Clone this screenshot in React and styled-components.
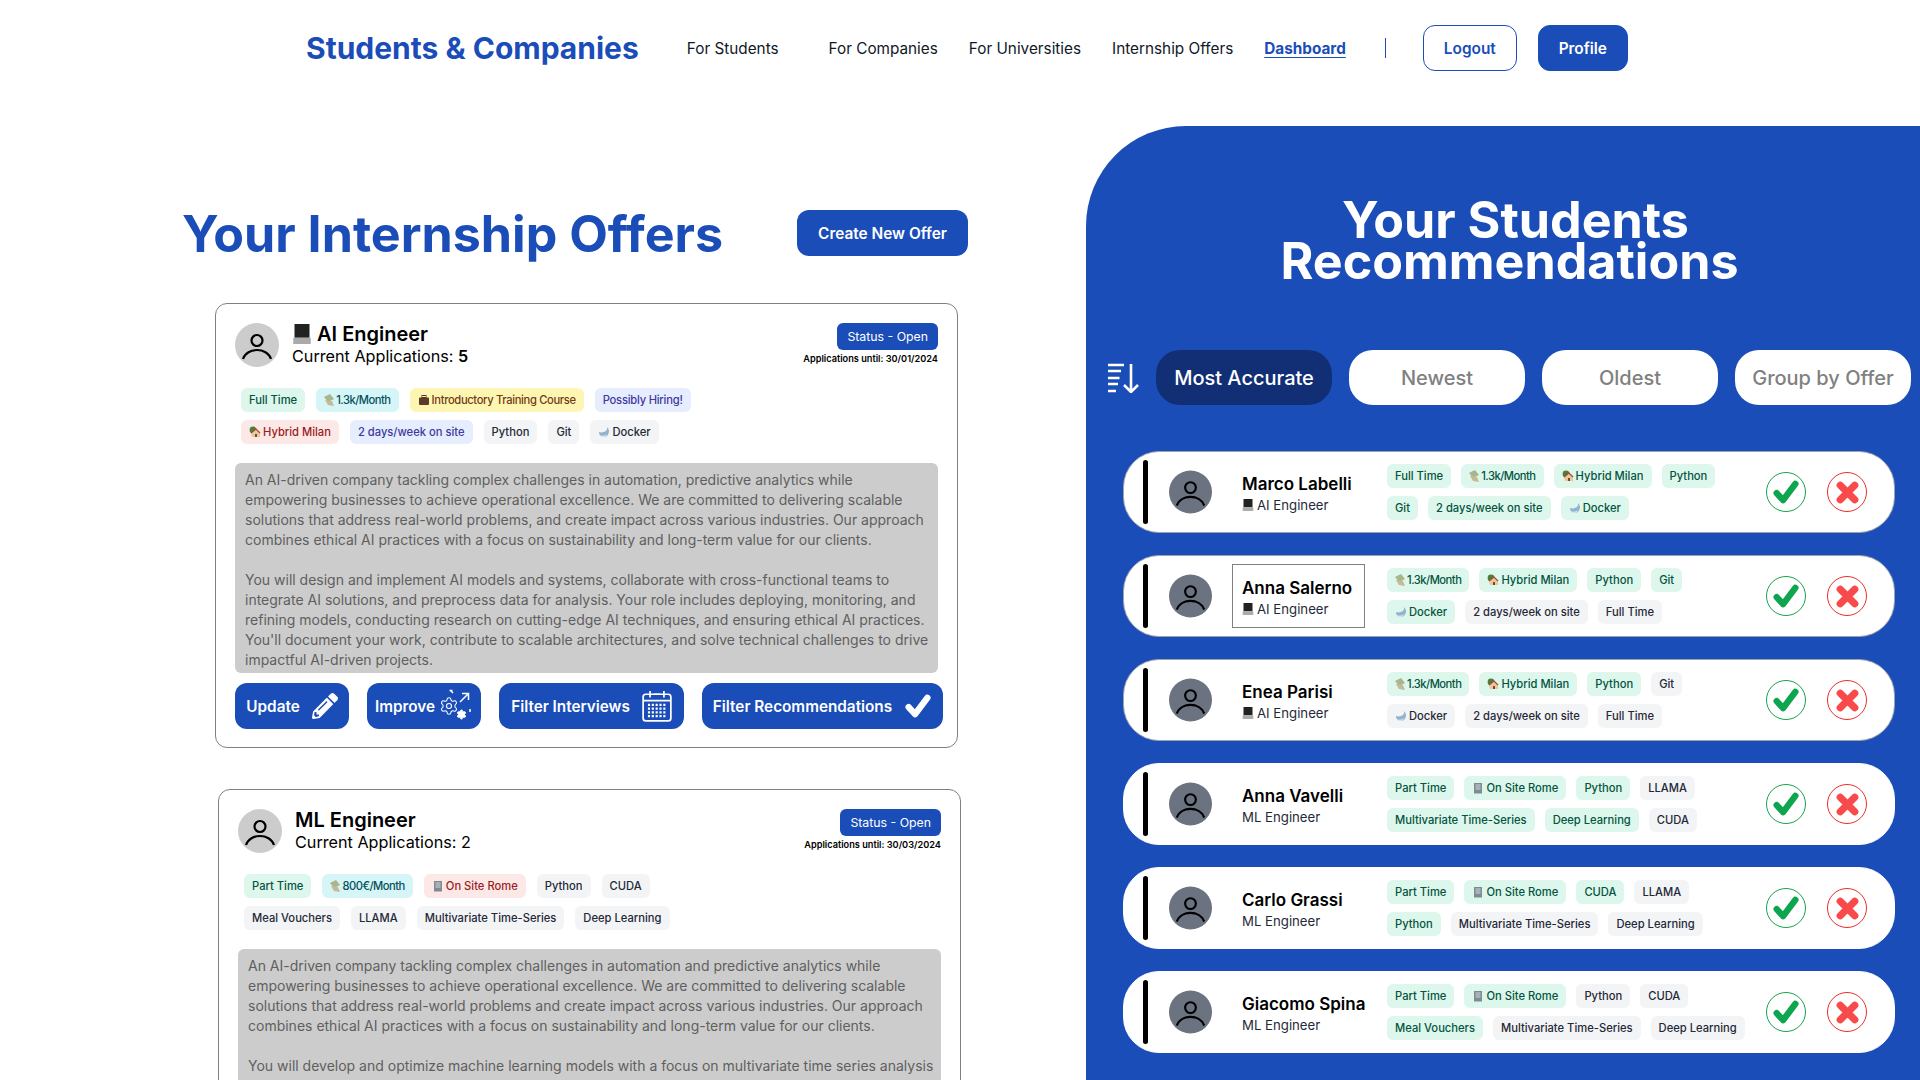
import React from "react";
import styled, { createGlobalStyle } from "styled-components";
import { FaPencilAlt } from "react-icons/fa";
import { Settings } from "lucide-react";

const BLUE = "#1a4db8";

const tones = {
  green: ["#def7ec", "#03543f"],
  teal: ["#d5f5f6", "#05505c"],
  yellow: ["#fdf6b2", "#723b13"],
  indigo: ["#e5edff", "#42389d"],
  red: ["#fde8e8", "#9b1c1c"],
  gray: ["#f3f4f6", "#1f2937"],
};

const GlobalStyle = createGlobalStyle`
  html, body {
    margin: 0;
    height: 100%;
    overflow: hidden;
    background: #fff;
    font-family: Inter, "Liberation Sans", sans-serif;
  }
  * { box-sizing: border-box; }
`;

const Page = styled.div`
  width: 1920px;
  height: 1080px;
  overflow: hidden;
`;

const Header = styled.header`
  height: 96px;
  display: flex;
  align-items: center;
  padding-left: 306px;
`;

const Logo = styled.a`
  font-size: 30px;
  font-weight: 700;
  color: ${BLUE};
  margin-right: 48px;
  white-space: nowrap;
`;

const NavLink = styled.a`
  font-size: 15.3px;
  font-weight: ${({ $active }) => ($active ? 700 : 400)};
  color: ${({ $active }) => ($active ? BLUE : "#111827")};
  margin-right: ${({ $mr }) => $mr || "31px"};
  text-decoration: ${({ $active }) => ($active ? "underline" : "none")};
  text-underline-offset: 3px;
  white-space: nowrap;
`;

const NavDivider = styled.span`
  width: 1px;
  height: 20px;
  background: ${BLUE};
  margin: 0 37px 0 8px;
`;

const HeaderButton = styled.button`
  height: 46px;
  width: ${({ $w }) => $w};
  margin-right: 21px;
  border: 1px solid ${BLUE};
  border-radius: 12px;
  background: ${({ $filled }) => ($filled ? BLUE : "#fff")};
  color: ${({ $filled }) => ($filled ? "#fff" : BLUE)};
  font: 600 15.4px Inter, sans-serif;
`;

const Main = styled.main`
  display: flex;
  align-items: flex-start;
`;

const OffersColumn = styled.section`
  width: 1086px;
  flex: none;
  padding: 114px 0 0 182px;
`;

const OffersHead = styled.div`
  display: flex;
  align-items: center;
  height: 46px;
  margin-bottom: 47px;
`;

const OffersTitle = styled.h1`
  margin: 0 74px 0 0;
  width: 541px;
  font-size: 50.2px;
  font-weight: 700;
  color: ${BLUE};
  white-space: nowrap;
`;

const CreateButton = styled.button`
  width: 171px;
  height: 46px;
  border: none;
  border-radius: 12px;
  background: ${BLUE};
  color: #fff;
  font: 600 15.4px Inter, sans-serif;
`;

const OfferCard = styled.article`
  width: 743px;
  margin: 0 0 41px ${({ $ml }) => $ml};
  padding: 19px 19px 18px;
  border: 1px solid #808080;
  border-radius: 12px;
`;

const CardTop = styled.div`
  display: flex;
  align-items: flex-start;
  height: 44px;
`;

const AvatarSlot = styled.div`
  width: ${({ $w }) => $w || "44px"};
  height: 44px;
  flex: none;
  display: flex;
`;

const CardTitles = styled.div`
  margin-left: 13px;
  flex: 1;
`;

const CardTitle = styled.div`
  display: flex;
  align-items: center;
  gap: 5px;
  font-size: 20px;
  font-weight: 600;
  line-height: 22px;
  color: #000;
`;

const CardSub = styled.div`
  font-size: 16.2px;
  line-height: 22px;
  color: #000;
  b { font-weight: 600; }
`;

const StatusBox = styled.div`
  display: flex;
  flex-direction: column;
  align-items: flex-end;
`;

const StatusBadge = styled.span`
  height: 27px;
  padding: 0 10px;
  display: flex;
  align-items: center;
  border-radius: 6px;
  background: ${BLUE};
  color: #fff;
  font-size: 12.3px;
`;

const Until = styled.span`
  margin-top: 2px;
  font-size: 9.2px;
  line-height: 14px;
  font-weight: 600;
  color: #000;
`;

const TagGroup = styled.div`
  display: flex;
  flex-direction: column;
  gap: 8px;
  margin: ${({ $m }) => $m || "0"};
`;

const TagLine = styled.div`
  display: flex;
  gap: ${({ $gap }) => $gap || "11px"};
`;

const Tag = styled.span`
  display: inline-flex;
  align-items: center;
  gap: 2px;
  height: 24px;
  padding: 0 8px;
  border-radius: 6px;
  font-size: 11.2px;
  font-weight: 500;
  letter-spacing: ${({ $ls }) => $ls || "normal"};
  white-space: nowrap;
  background: ${({ $tone }) => tones[$tone][0]};
  color: ${({ $tone }) => tones[$tone][1]};
`;

const Description = styled.div`
  height: 210px;
  margin-top: 19px;
  padding: 7px 10px 3px;
  border-radius: 6px;
  background: #cccccc;
  color: #5f5f5f;
  font-size: 14px;
  line-height: 20px;
  overflow: hidden;
  white-space: pre;
`;

const ActionBar = styled.div`
  display: flex;
  gap: 18px;
  margin-top: 10px;
  margin-right: -5px;
`;

const ActionButton = styled.button`
  width: ${({ $w }) => $w};
  height: 46px;
  flex: none;
  display: flex;
  align-items: center;
  justify-content: center;
  gap: ${({ $gap }) => $gap || "12px"};
  border: none;
  border-radius: 12px;
  background: ${BLUE};
  color: #fff;
  font: 600 15.3px Inter, sans-serif;
  white-space: nowrap;
  padding: 0;
`;

const Panel = styled.aside`
  flex: 1;
  min-width: 0;
  height: 1100px;
  margin-top: 30px;
  padding: 73px 10px 0 19px;
  background: ${BLUE};
  border-top-left-radius: 100px;
`;

const PanelTitle = styled.h2`
  margin: 0 0 0 4px;
  text-align: center;
  font-size: 50.2px;
  line-height: 41px;
  font-weight: 700;
  color: #fff;
`;

const TitleFirstLine = styled.span`
  padding-left: 12px;
`;

const FilterRow = styled.div`
  display: flex;
  align-items: center;
  margin-top: 69px;
`;

const SortIcon = styled.svg`
  width: 32px;
  height: 30px;
  margin: 0 16px 0 3px;
  flex: none;
`;

const FilterPill = styled.button`
  width: 176px;
  height: 55px;
  margin-right: 17px;
  flex: none;
  padding: 0;
  border: none;
  border-radius: 24px;
  background: ${({ $on }) => ($on ? "#122f75" : "#fff")};
  color: ${({ $on }) => ($on ? "#fff" : "#808080")};
  font: 500 20px Inter, sans-serif;
  white-space: nowrap;
`;

const StudentList = styled.div`
  display: flex;
  flex-direction: column;
  gap: 22px;
  margin-top: 46px;
  padding-left: 18px;
`;

const StudentRow = styled.div`
  width: 772px;
  height: 82px;
  flex: none;
  display: flex;
  align-items: center;
  padding-left: 19px;
  background: #fff;
  border: 1px solid ${({ $edge }) => ($edge ? "#9ca3af" : "#fff")};
  border-radius: 36px;
`;

const RowBar = styled.span`
  width: 5px;
  height: 64px;
  flex: none;
  margin-right: 21px;
  border-radius: 3px;
  background: #000;
`;

const StudentInfo = styled.div`
  width: 133px;
  height: 64px;
  flex: none;
  margin: 0 22px 0 20px;
  padding: 3px 0 0 9px;
  display: flex;
  flex-direction: column;
  justify-content: center;
  border: 1px solid ${({ $boxed }) => ($boxed ? "#808080" : "transparent")};
`;

const StudentName = styled.div`
  font-size: 17px;
  font-weight: 600;
  line-height: 22px;
  color: #000;
  white-space: nowrap;
`;

const StudentRole = styled.div`
  display: flex;
  align-items: center;
  gap: 3px;
  font-size: 13.2px;
  line-height: 20px;
  color: #1f2937;
`;

const RowTags = styled.div`
  width: 379px;
  flex: none;
`;

const Decision = styled.button`
  width: 40px;
  height: 40px;
  flex: none;
  margin-right: 21px;
  padding: 0;
  display: flex;
  align-items: center;
  justify-content: center;
  background: #fff;
  border-radius: 50%;
  border: 1.5px solid ${({ $c }) => $c};
`;

const Person = ({ bg, size = 44 }) => (
  <svg width={size} height={size} viewBox="0 0 44 44">
    <circle cx="22" cy="22" r="22" fill={bg} />
    <circle cx="22" cy="17.5" r="5.5" fill="none" stroke="#000" strokeWidth="2.2" />
    <path d="M8 36c2-6 8-9 14-9s12 3 14 9" fill="none" stroke="#000" strokeWidth="2.2" />
  </svg>
);

const Tick = ({ color, size }) => (
  <svg width={size} height={size} viewBox="0 0 24 24" fill="none">
    <path d="M4 13l5.5 6L20 5" stroke={color} strokeWidth="5.5" strokeLinecap="round" strokeLinejoin="round" />
  </svg>
);

const Cross = ({ color, size }) => (
  <svg width={size} height={size} viewBox="0 0 24 24" fill="none">
    <path d="M6 6l12 12M18 6L6 18" stroke={color} strokeWidth="6" strokeLinecap="round" />
  </svg>
);

// small stand-ins for the emoji in the reference
const Laptop = ({ size = 14 }) => (
  <svg width={size} height={size} viewBox="0 0 16 16">
    <rect x="2" y="0" width="12" height="11" fill="#222" />
    <rect x="1" y="11" width="14" height="5" fill="#aaa" />
  </svg>
);
const Money = () => (
  <svg width="10" height="12" viewBox="0 0 10 12">
    <path d="M0 3l6-3 4 5-6 3z" fill="#a9b58d" />
    <path d="M1 6l7 1 2 5-6-1z" fill="#c4ba98" />
  </svg>
);
const House = () => (
  <svg width="12" height="12" viewBox="0 0 12 12">
    <circle cx="4" cy="4" r="3.4" fill="#4f7d3a" />
    <path d="M2 7l5-4 4 4v4H3z" fill="#e6c9a0" />
    <path d="M2 7l5-4 4 4" fill="none" stroke="#a5482f" strokeWidth="1.2" />
    <rect x="6" y="8" width="2" height="3" fill="#7a4a2a" />
  </svg>
);
const Whale = () => (
  <svg width="12" height="12" viewBox="0 0 12 12">
    <path d="M1 6c3 1 5 0 7-1 1-1 1-3 2-4 0 2 1 3 1 4 0 3-2 6-5 6S1 9 1 6z" fill="#8fb4d2" />
    <path d="M2 9c2 1 5 1 7-1-1 3-3 3-4 3s-2 0-3-2z" fill="#dfe6ea" />
  </svg>
);
const Brief = () => (
  <svg width="12" height="12" viewBox="0 0 12 12">
    <rect x="4" y="1.5" width="4" height="2" fill="none" stroke="#4a2f22" />
    <rect x="1" y="3.5" width="10" height="7.5" rx="1" fill="#5b3a2a" />
  </svg>
);
const Office = () => (
  <svg width="12" height="12" viewBox="0 0 12 12">
    <rect x="2" y="1" width="8" height="10.5" fill="#7f8a91" />
    <path d="M3.5 3h5M3.5 5h5M3.5 7h5" stroke="#cfd8dc" />
  </svg>
);

const emoji = { money: Money, house: House, whale: Whale, brief: Brief, office: Office };

const Pill = ({ t, e, c = "gray", ls }) => {
  const Icon = emoji[e];
  return (
    <Tag $tone={c} $ls={ls || (e === "money" ? "-0.5px" : undefined)}>
      {Icon && <Icon />}
      {t}
    </Tag>
  );
};

const CalendarIcon = () => (
  <svg width="30" height="32" viewBox="2 1 28 30" fill="none" stroke="#fff" strokeWidth="1.6">
    <rect x="3" y="5" width="26" height="25" rx="2.5" />
    <path d="M3 11h26M9.5 2v6M22.5 2v6M13 5h6" />
    <path d="M7.5 15h17M7.5 18.5h17M7.5 22h17M7.5 25.5h17" strokeDasharray="2 1.6" strokeWidth="2" />
  </svg>
);

const ImproveIcon = () => (
  <svg width="34" height="34" viewBox="0 0 34 34" fill="none">
    <Settings x="0" y="7" width="20" height="20" color="#fff" strokeWidth="1.3" />
    <Settings x="17" y="20" width="11" height="11" color="#fff" fill="#fff" strokeWidth="2" />
    <path d="M21 13l8-8M23 4.5h6.5V11" stroke="#fff" strokeWidth="1.5" />
    <path d="M12 2l2 2M10.5 1.5h3M31 20v3" stroke="#fff" strokeWidth="1.5" />
  </svg>
);

const offers = [
  {
    ml: "33px",
    title: "AI Engineer",
    laptop: true,
    apps: <>Current Applications: <b>5</b></>,
    until: "30/01/2024",
    tags: [
      [
        { t: "Full Time", c: "green" },
        { t: "1.3k/Month", c: "teal", e: "money" },
        { t: "Introductory Training Course", c: "yellow", e: "brief", ls: "-0.35px" },
        { t: "Possibly Hiring!", c: "indigo", ls: "-0.22px" },
      ],
      [
        { t: "Hybrid Milan", c: "red", e: "house" },
        { t: "2 days/week on site", c: "indigo" },
        { t: "Python" },
        { t: "Git" },
        { t: "Docker", e: "whale" },
      ],
    ],
    text: `An AI-driven company tackling complex challenges in automation, predictive analytics while
empowering businesses to achieve operational excellence. We are committed to delivering scalable
solutions that address real-world problems, and create impact across various industries. Our approach
combines ethical AI practices with a focus on sustainability and long-term value for our clients.

You will design and implement AI models and systems, collaborate with cross-functional teams to
integrate AI solutions, and preprocess data for analysis. Your role includes deploying, monitoring, and
refining models, conducting research on cutting-edge AI techniques, and ensuring ethical AI practices.
You'll document your work, contribute to scalable architectures, and solve technical challenges to drive
impactful AI-driven projects.`,
    actions: true,
  },
  {
    ml: "36px",
    title: "ML Engineer",
    apps: "Current Applications: 2",
    until: "30/03/2024",
    tags: [
      [
        { t: "Part Time", c: "green" },
        { t: "800€/Month", c: "teal", e: "money" },
        { t: "On Site Rome", c: "red", e: "office" },
        { t: "Python" },
        { t: "CUDA" },
      ],
      [
        { t: "Meal Vouchers" },
        { t: "LLAMA" },
        { t: "Multivariate Time-Series" },
        { t: "Deep Learning" },
      ],
    ],
    text: `An AI-driven company tackling complex challenges in automation and predictive analytics while
empowering businesses to achieve operational excellence. We are committed to delivering scalable
solutions that address real-world problems and create impact across various industries. Our approach
combines ethical AI practices with a focus on sustainability and long-term value for our clients.

You will develop and optimize machine learning models with a focus on multivariate time series analysis`,
  },
];

const g = (t, e) => ({ t, e, c: "green" });
const n = (t, e) => ({ t, e });

const students = [
  {
    name: "Marco Labelli", role: "AI Engineer", laptop: true,
    tags: [
      [g("Full Time"), g("1.3k/Month", "money"), g("Hybrid Milan", "house"), g("Python")],
      [g("Git"), g("2 days/week on site"), g("Docker", "whale")],
    ],
  },
  {
    name: "Anna Salerno", role: "AI Engineer", laptop: true, boxed: true,
    tags: [
      [g("1.3k/Month", "money"), g("Hybrid Milan", "house"), g("Python"), g("Git")],
      [g("Docker", "whale"), n("2 days/week on site"), n("Full Time")],
    ],
  },
  {
    name: "Enea Parisi", role: "AI Engineer", laptop: true,
    tags: [
      [g("1.3k/Month", "money"), g("Hybrid Milan", "house"), g("Python"), n("Git")],
      [n("Docker", "whale"), n("2 days/week on site"), n("Full Time")],
    ],
  },
  {
    name: "Anna Vavelli", role: "ML Engineer",
    tags: [
      [g("Part Time"), g("On Site Rome", "office"), g("Python"), n("LLAMA")],
      [g("Multivariate Time-Series"), g("Deep Learning"), n("CUDA")],
    ],
  },
  {
    name: "Carlo Grassi", role: "ML Engineer",
    tags: [
      [g("Part Time"), g("On Site Rome", "office"), g("CUDA"), n("LLAMA")],
      [g("Python"), n("Multivariate Time-Series"), n("Deep Learning")],
    ],
  },
  {
    name: "Giacomo Spina", role: "ML Engineer",
    tags: [
      [g("Part Time"), g("On Site Rome", "office"), n("Python"), n("CUDA")],
      [g("Meal Vouchers"), n("Multivariate Time-Series"), n("Deep Learning")],
    ],
  },
];

export default function App() {
  return (
    <Page>
      <GlobalStyle />
      <Header>
        <Logo>Students &amp; Companies</Logo>
        <NavLink $mr="50px">For Students</NavLink>
        <NavLink>For Companies</NavLink>
        <NavLink>For Universities</NavLink>
        <NavLink>Internship Offers</NavLink>
        <NavLink $active>Dashboard</NavLink>
        <NavDivider />
        <HeaderButton $w="94px">Logout</HeaderButton>
        <HeaderButton $w="90px" $filled>Profile</HeaderButton>
      </Header>
      <Main>
        <OffersColumn>
          <OffersHead>
            <OffersTitle>Your Internship Offers</OffersTitle>
            <CreateButton>Create New Offer</CreateButton>
          </OffersHead>
          {offers.map((o) => (
            <OfferCard key={o.title} $ml={o.ml}>
              <CardTop>
                <AvatarSlot><Person bg="#cccccc" /></AvatarSlot>
                <CardTitles>
                  <CardTitle>
                    {o.laptop && <Laptop size={20} />}
                    {o.title}
                  </CardTitle>
                  <CardSub>{o.apps}</CardSub>
                </CardTitles>
                <StatusBox>
                  <StatusBadge>Status - Open</StatusBadge>
                  <Until>Applications until: {o.until}</Until>
                </StatusBox>
              </CardTop>
              <TagGroup $m="21px 0 0 6px">
                {o.tags.map((line, i) => (
                  <TagLine key={i}>
                    {line.map((p) => <Pill key={p.t} {...p} />)}
                  </TagLine>
                ))}
              </TagGroup>
              <Description>{o.text}</Description>
              {o.actions && (
                <ActionBar>
                  <ActionButton $w="114px">Update <FaPencilAlt size={26} /></ActionButton>
                  <ActionButton $w="114px" $gap="4px">Improve <ImproveIcon /></ActionButton>
                  <ActionButton $w="185px">Filter Interviews <CalendarIcon /></ActionButton>
                  <ActionButton $w="241px">Filter Recommendations <Tick color="#fff" size={28} /></ActionButton>
                </ActionBar>
              )}
            </OfferCard>
          ))}
        </OffersColumn>
        <Panel>
          <PanelTitle><TitleFirstLine>Your Students</TitleFirstLine><br />Recommendations</PanelTitle>
          <FilterRow>
            <SortIcon viewBox="0 0 32 30" fill="none" stroke="#fff">
              <path d="M0 2h16M0 8h13M0 15h11.5M0 21h10M0 28h8" strokeWidth="2.6" />
              <path d="M23 1v28M16 22l7 7 7-7" strokeWidth="2.6" />
            </SortIcon>
            <FilterPill $on>Most Accurate</FilterPill>
            <FilterPill>Newest</FilterPill>
            <FilterPill>Oldest</FilterPill>
            <FilterPill>Group by Offer</FilterPill>
          </FilterRow>
          <StudentList>
            {students.map((s) => (
              <StudentRow key={s.name} $edge={s.laptop}>
                <RowBar />
                <AvatarSlot $w="43px"><Person bg="#6b7280" /></AvatarSlot>
                <StudentInfo $boxed={s.boxed}>
                  <StudentName>{s.name}</StudentName>
                  <StudentRole>
                    {s.laptop && <Laptop size={12} />}
                    {s.role}
                  </StudentRole>
                </StudentInfo>
                <RowTags>
                  <TagGroup>
                    {s.tags.map((line, i) => (
                      <TagLine key={i} $gap="10px">
                        {line.map((p) => <Pill key={p.t} {...p} />)}
                      </TagLine>
                    ))}
                  </TagGroup>
                </RowTags>
                <Decision $c="#16a34a"><Tick color="#0ea54f" size={28} /></Decision>
                <Decision $c="#ef2b2b"><Cross color="#f84a4a" size={29} /></Decision>
              </StudentRow>
            ))}
          </StudentList>
        </Panel>
      </Main>
    </Page>
  );
}
